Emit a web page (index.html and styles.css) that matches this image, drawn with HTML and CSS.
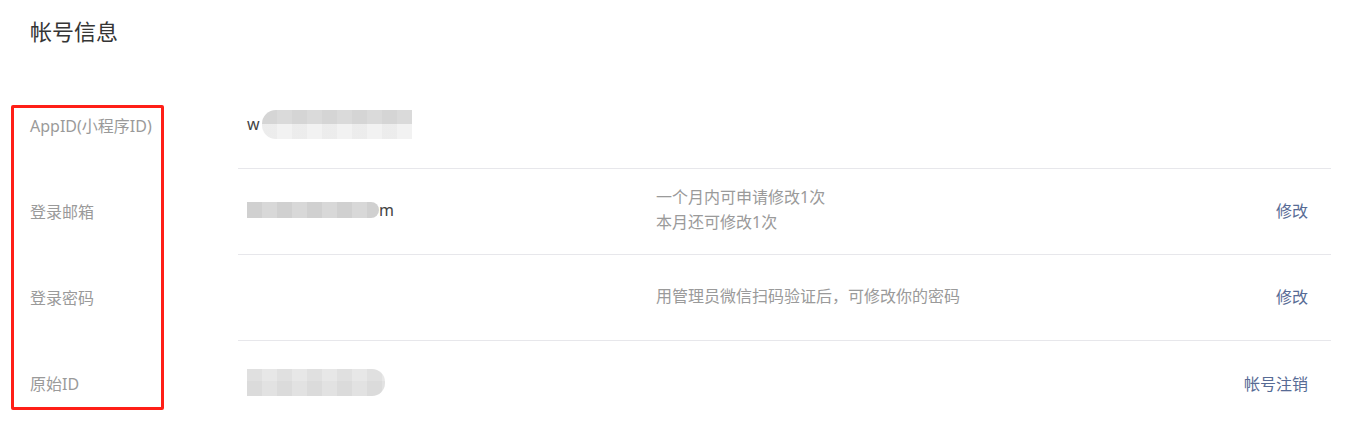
FILE: index.html
```html
<!DOCTYPE html>
<html lang="zh-CN">
<head>
    <meta charset="UTF-8">
    <meta name="viewport" content="width=device-width, initial-scale=1.0">
    <title>帐号信息</title>
    <link rel="stylesheet" href="styles.css">
</head>
<body>
    <div class="page">
        <h2 class="title">帐号信息</h2>

        <div class="info-list">
            <!-- red highlight drawn over the label column -->
            <div class="mark-box"></div>

            <div class="info-row">
                <div class="label">AppID(小程序ID)</div>
                <div class="cell">
                    <div class="value">w<span class="mosaic mosaic-id"></span></div>
                    <div class="desc"></div>
                    <div class="action"></div>
                </div>
            </div>

            <div class="info-row">
                <div class="label">登录邮箱</div>
                <div class="cell">
                    <div class="value"><span class="mosaic mosaic-mail"></span>m</div>
                    <div class="desc">一个月内可申请修改1次<br>本月还可修改1次</div>
                    <div class="action"><a href="#">修改</a></div>
                </div>
            </div>

            <div class="info-row">
                <div class="label">登录密码</div>
                <div class="cell">
                    <div class="value"></div>
                    <div class="desc">用管理员微信扫码验证后，可修改你的密码</div>
                    <div class="action"><a href="#">修改</a></div>
                </div>
            </div>

            <div class="info-row">
                <div class="label">原始ID</div>
                <div class="cell last">
                    <div class="value"><span class="mosaic mosaic-raw"></span></div>
                    <div class="desc"></div>
                    <div class="action"><a href="#">帐号注销</a></div>
                </div>
            </div>
        </div>
    </div>
</body>
</html>
```

FILE: styles.css
```css
body {
    margin: 0;
    background: #ffffff;
    font-family: "Noto Sans", "Noto Sans CJK SC", sans-serif;
    font-size: 16px;
    color: #353535;
}

.page {
    padding-right: 23px;
}

.title {
    margin: 0;
    padding: 15px 0 0 30px;
    font-size: 22px;
    font-weight: normal;
    line-height: 32px;
    color: #353535;
}

.info-list {
    position: relative;
    margin-top: 36px;
}

/* annotation box over the labels */
.mark-box {
    position: absolute;
    left: 11px;
    top: 22px;
    width: 153px;
    height: 305px;
    box-sizing: border-box;
    border: 3px solid #ff1f17;
    border-radius: 2px;
}

.info-row {
    display: flex;
    height: 86px;
}

.label {
    width: 208px;
    padding: 0 0 3px 30px;
    display: flex;
    align-items: center;
    color: #9a9a9a;
}

.cell {
    flex: 1;
    display: flex;
    align-items: center;
    padding: 0 0 3px 9px;
    border-bottom: 1px solid #e7e7eb;
}

.cell.last {
    border-bottom: none;
}

.value {
    width: 409px;
    display: flex;
    align-items: center;
    color: #444444;
}

.desc {
    flex: 1;
    color: #9a9a9a;
    line-height: 25px;
}

.action {
    padding-right: 23px;
}

.action a {
    color: #576b95;
    text-decoration: none;
}

/* blurred-out private values */
.mosaic {
    display: inline-block;
}

.mosaic-id {
    width: 150px;
    height: 29px;
    margin-left: 2px;
    border-radius: 14px 0 0 14px;
    background:
        repeating-linear-gradient(to right, rgba(0,0,0,0.025) 0 15px, transparent 15px 30px),
        linear-gradient(to bottom, #dadada 50%, #f2f2f2 50%);
}

.mosaic-mail {
    width: 132px;
    height: 16px;
    border-radius: 0 8px 8px 0;
    background:
        repeating-linear-gradient(to right, rgba(0,0,0,0.04) 0 15px, transparent 15px 30px),
        #d8d8d8;
}

.mosaic-raw {
    width: 138px;
    height: 27px;
    border-radius: 0 13px 13px 0;
    background:
        repeating-linear-gradient(to right, rgba(0,0,0,0.03) 0 15px, transparent 15px 30px),
        linear-gradient(to bottom, #e7e7e7 45%, #e2e2e2 45%);
}
```
